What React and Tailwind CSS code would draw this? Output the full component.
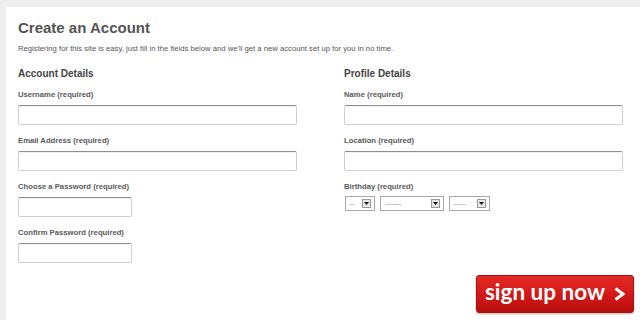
import React from 'react';

const font = { fontFamily: '"Liberation Sans", Arial, sans-serif' };

function Field({ label, width = 'w-full' }) {
  return (
    <div className="mb-[11px]">
      <div className="text-[7.7px] leading-[10px] font-bold text-[#5a5a5a] mb-[5px]">{label}</div>
      <div className={`${width} h-[20px] bg-white border border-[#d0d0d0] border-t-[#8f8f8f] rounded-[2px] shadow-[inset_0_1px_1px_rgba(0,0,0,0.06)]`} />
    </div>
  );
}

function Select({ width, dashes }) {
  return (
    <div className={`${width} h-[15px] border border-[#a9a9a9] bg-white flex items-center justify-between pl-[4px] pr-[3px]`}>
      <span className="text-[7px] leading-none text-[#888]">{dashes}</span>
      <span className="w-[9px] h-[9px] bg-[#e6e6e6] border border-[#9a9a9a] flex items-center justify-center">
        <svg width="5" height="3" viewBox="0 0 5 3">
          <path d="M0 0 L5 0 L2.5 3 Z" fill="#111" />
        </svg>
      </span>
    </div>
  );
}

export default function App() {
  return (
    <div className="h-[320px] w-[640px] overflow-hidden bg-[#eeeeee] pl-[6px] pt-[7px]" style={font}>
      <div className="h-full bg-white rounded-tl-[3px] pl-[12px] pt-[12px]">
        {/* Header */}
        <h1 className="text-[15px] leading-[18px] font-bold text-[#555]">Create an Account</h1>
        <p className="mt-[7px] text-[7.7px] leading-[10px] text-[#555]">
          Registering for this site is easy, just fill in the fields below and we'll get a new account set up for you in no time.
        </p>

        {/* Columns */}
        <div className="grid grid-cols-[279px_279px] gap-x-[47px] mt-[14px]">
          <div>
            <h2 className="text-[10px] leading-[12px] font-bold text-[#444] mb-[10px]">Account Details</h2>
            <Field label="Username (required)" />
            <Field label="Email Address (required)" />
            <Field label="Choose a Password (required)" width="w-[114px]" />
            <Field label="Confirm Password (required)" width="w-[114px]" />
          </div>
          <div>
            <h2 className="text-[10px] leading-[12px] font-bold text-[#444] mb-[10px]">Profile Details</h2>
            <Field label="Name (required)" />
            <Field label="Location (required)" />
            <div className="text-[7.7px] leading-[10px] font-bold text-[#5a5a5a] mb-[4px]">Birthday (required)</div>
            <div className="flex gap-[5px] pl-[1px]">
              <Select width="w-[30px]" dashes="--" />
              <Select width="w-[64px]" dashes="-------" />
              <Select width="w-[41px]" dashes="-----" />
            </div>
          </div>
        </div>

        {/* Submit */}
        <div className="flex justify-end pr-[6px] mt-[1px]">
          <button className="w-[158px] h-[38px] rounded-[3px] border border-[#a80f0f] bg-gradient-to-b from-[#e42a24] via-[#d41818] to-[#b80e0e] shadow-[0_1px_2px_rgba(0,0,0,0.3)] flex items-center justify-center gap-[9px] text-white">
            <span className="text-[22.5px] leading-none font-bold pb-[3px]" style={{ fontFamily: 'Lato, "Open Sans", sans-serif' }}>sign up now</span>
            <svg width="11" height="14" viewBox="0 0 11 14">
              <path d="M1.5 1.5 L9 7 L1.5 12.5" fill="none" stroke="#fff" strokeWidth="3" />
            </svg>
          </button>
        </div>
      </div>
    </div>
  );
}
